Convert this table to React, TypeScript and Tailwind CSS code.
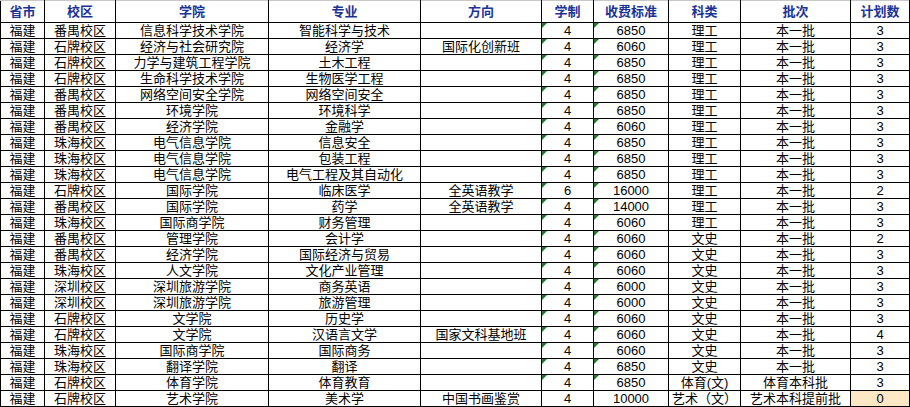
const headers = ['省市', '校区', '学院', '专业', '方向', '学制', '收费标准', '科类', '批次', '计划数'];
const widths = ['w-[44px]', 'w-[71px]', 'w-[153px]', 'w-[152px]', 'w-[121px]', 'w-[52px]', 'w-[75px]', 'w-[72px]', 'w-[110px]', 'w-[59px]'];

// 省市 校区 学院 专业 方向 学制 收费标准 科类 批次 计划数
const rows: string[][] = [
  ['福建', '番禺校区', '信息科学技术学院', '智能科学与技术', '', '4', '6850', '理工', '本一批', '3'],
  ['福建', '石牌校区', '经济与社会研究院', '经济学', '国际化创新班', '4', '6060', '理工', '本一批', '3'],
  ['福建', '石牌校区', '力学与建筑工程学院', '土木工程', '', '4', '6850', '理工', '本一批', '3'],
  ['福建', '石牌校区', '生命科学技术学院', '生物医学工程', '', '4', '6850', '理工', '本一批', '3'],
  ['福建', '番禺校区', '网络空间安全学院', '网络空间安全', '', '4', '6850', '理工', '本一批', '3'],
  ['福建', '番禺校区', '环境学院', '环境科学', '', '4', '6850', '理工', '本一批', '3'],
  ['福建', '番禺校区', '经济学院', '金融学', '', '4', '6060', '理工', '本一批', '3'],
  ['福建', '珠海校区', '电气信息学院', '信息安全', '', '4', '6850', '理工', '本一批', '3'],
  ['福建', '珠海校区', '电气信息学院', '包装工程', '', '4', '6850', '理工', '本一批', '3'],
  ['福建', '珠海校区', '电气信息学院', '电气工程及其自动化', '', '4', '6850', '理工', '本一批', '3'],
  ['福建', '石牌校区', '国际学院', '临床医学', '全英语教学', '6', '16000', '理工', '本一批', '2'],
  ['福建', '番禺校区', '国际学院', '药学', '全英语教学', '4', '14000', '理工', '本一批', '3'],
  ['福建', '珠海校区', '国际商学院', '财务管理', '', '4', '6060', '理工', '本一批', '3'],
  ['福建', '番禺校区', '管理学院', '会计学', '', '4', '6060', '文史', '本一批', '2'],
  ['福建', '番禺校区', '经济学院', '国际经济与贸易', '', '4', '6060', '文史', '本一批', '3'],
  ['福建', '珠海校区', '人文学院', '文化产业管理', '', '4', '6060', '文史', '本一批', '3'],
  ['福建', '深圳校区', '深圳旅游学院', '商务英语', '', '4', '6000', '文史', '本一批', '3'],
  ['福建', '深圳校区', '深圳旅游学院', '旅游管理', '', '4', '6000', '文史', '本一批', '3'],
  ['福建', '石牌校区', '文学院', '历史学', '', '4', '6060', '文史', '本一批', '3'],
  ['福建', '石牌校区', '文学院', '汉语言文学', '国家文科基地班', '4', '6060', '文史', '本一批', '4'],
  ['福建', '珠海校区', '国际商学院', '国际商务', '', '4', '6060', '文史', '本一批', '3'],
  ['福建', '珠海校区', '翻译学院', '翻译', '', '4', '6850', '文史', '本一批', '3'],
  ['福建', '石牌校区', '体育学院', '体育教育', '', '4', '6850', '体育(文)', '体育本科批', '3'],
  ['福建', '石牌校区', '艺术学院', '美术学', '中国书画鉴赏', '4', '10000', '艺术（文）', '艺术本科提前批', '0'],
];

// little green "number stored as text" corner
function TextFlag() {
  return (
    <span className="absolute left-0 top-0 w-0 h-0 border-t-[5px] border-r-[5px] border-t-[#1f7a2e] border-r-transparent" />
  );
}

export default function App() {
  const last = rows.length - 1;
  return (
    <div className="w-[910px] h-[407px] bg-white overflow-hidden font-['Liberation_Sans','Noto_Sans_CJK_SC',sans-serif]">
      <table className="w-[909px] table-fixed border-collapse text-[13px] leading-none text-black">
        <colgroup>
          {widths.map((w, i) => (
            <col key={i} className={w} />
          ))}
        </colgroup>
        <thead>
          <tr className="h-[22px]">
            {headers.map((h) => (
              <th
                key={h}
                className="border border-black border-t-[#c8c8c8] p-0 text-center font-bold text-[13px] text-[#1c3396]"
              >
                {h}
              </th>
            ))}
          </tr>
        </thead>
        <tbody>
          {rows.map((r, ri) => (
            <tr key={ri} className="h-[16px]">
              {r.map((c, ci) => (
                <td
                  key={ci}
                  className={`relative border border-black p-0 text-center whitespace-nowrap overflow-hidden ${
                    ri === last && ci === 9 ? 'bg-[#fce8c4]' : ''
                  }`}
                >
                  {ri !== last && (ci === 5 || ci === 6) && <TextFlag />}
                  {c}
                </td>
              ))}
            </tr>
          ))}
        </tbody>
      </table>
    </div>
  );
}
